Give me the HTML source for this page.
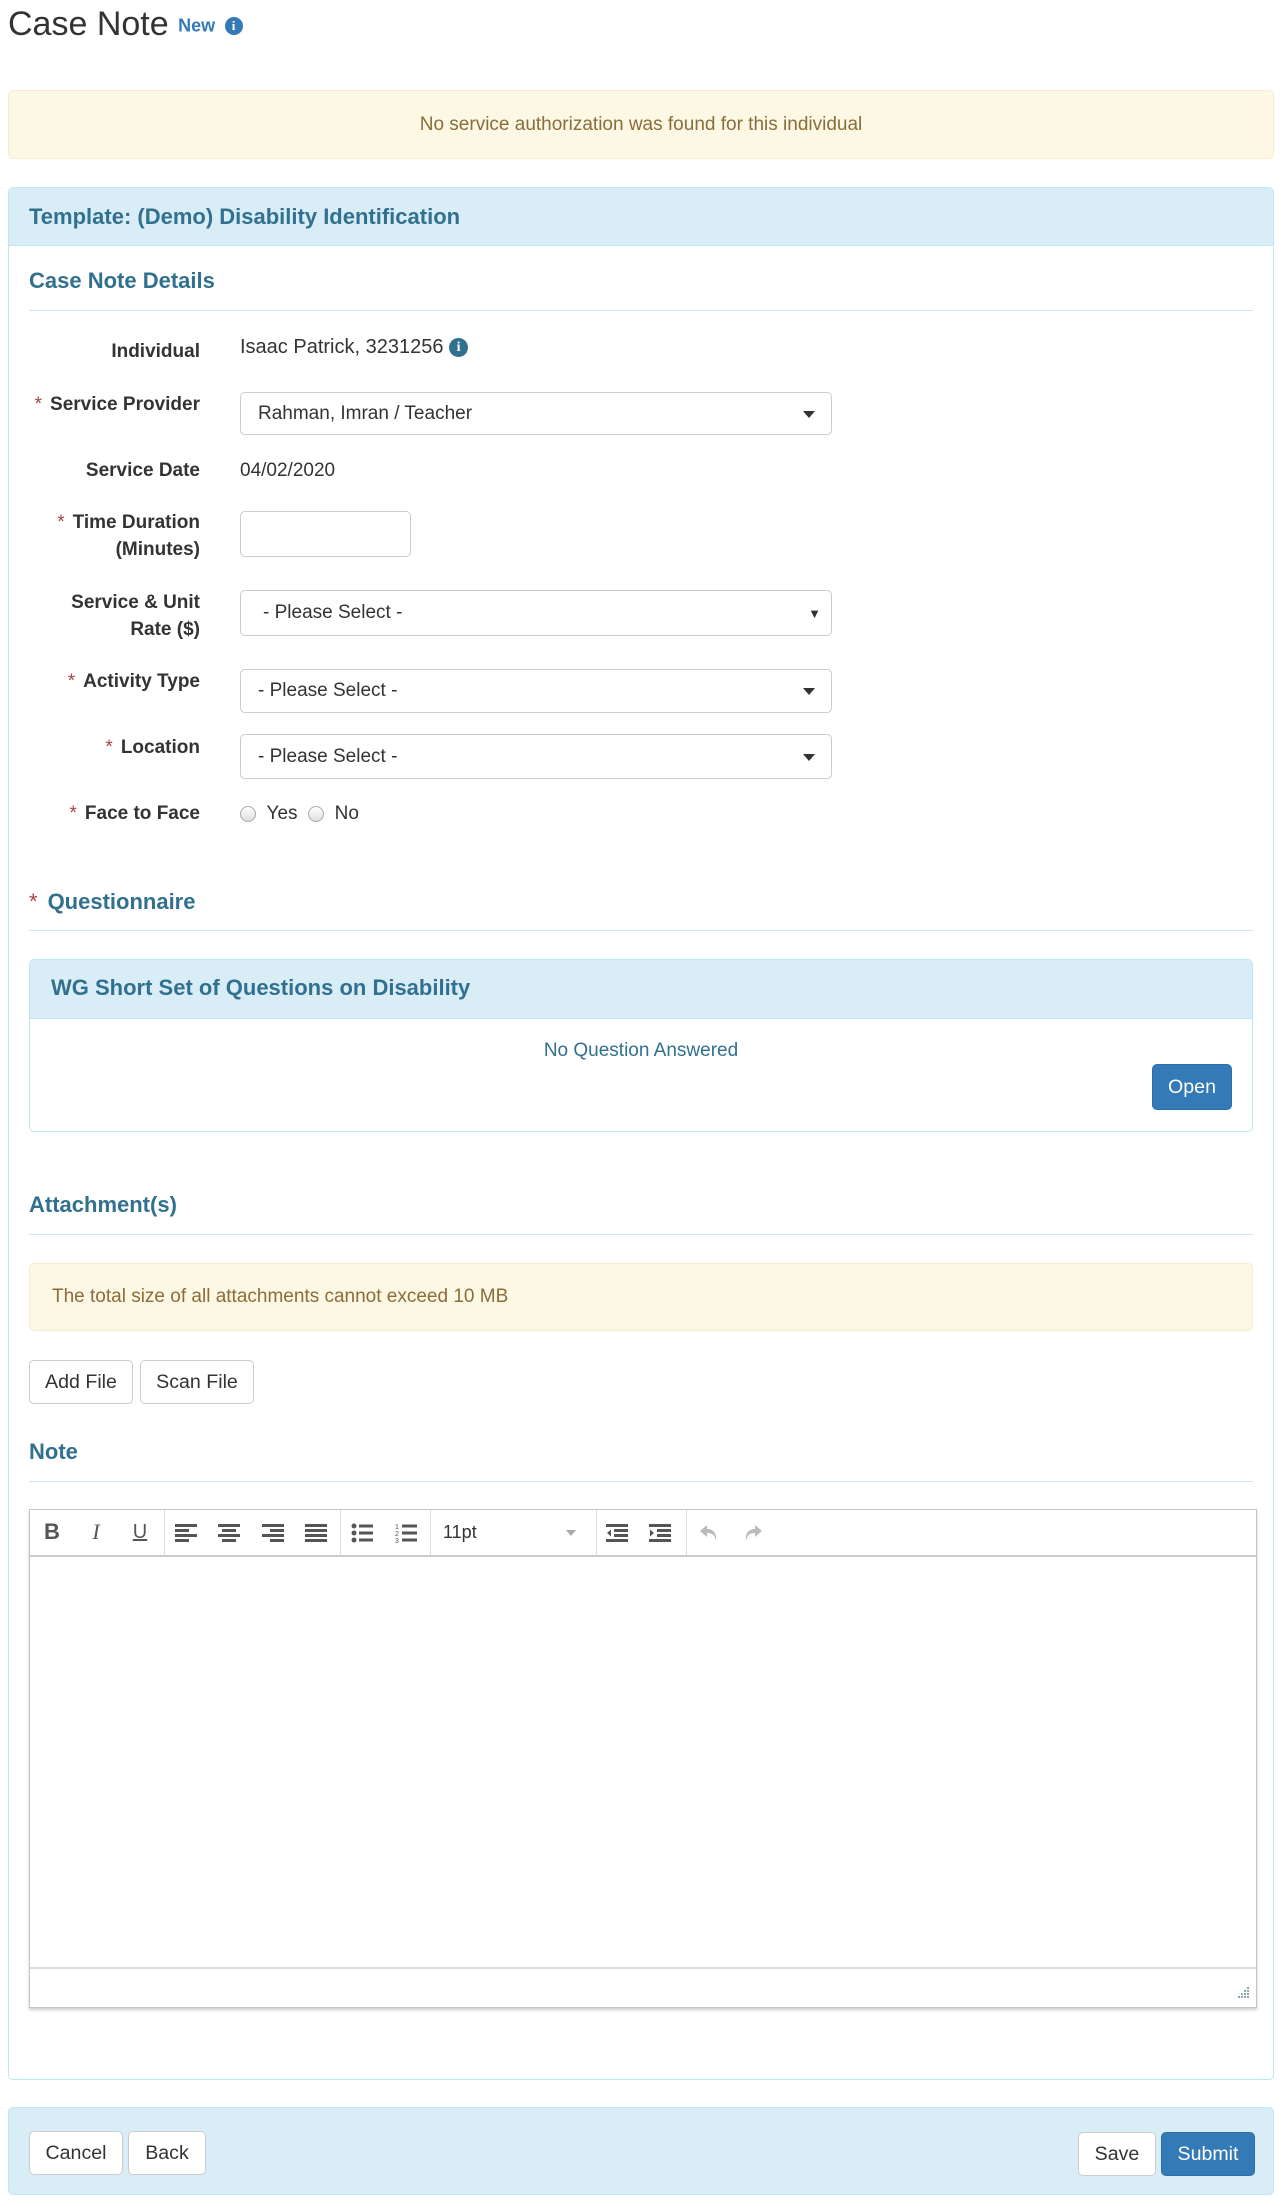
<!DOCTYPE html>
<html><head><meta charset="utf-8"><style>
*{box-sizing:border-box;margin:0;padding:0}
body{width:1283px;height:2206px;background:#fff;font-family:"Liberation Sans",sans-serif;color:#333;position:relative;overflow:hidden;font-size:19.6px}
.a{position:absolute}
.lbl{position:absolute;right:1083px;font-weight:bold;text-align:right;line-height:27px;font-size:19px}
.req{color:#a94442;margin-right:8px;font-weight:normal}
.h{position:absolute;left:29px;color:#31708f;font-weight:bold;font-size:22px}
.hr{position:absolute;left:29px;width:1224px;height:1px;background:#c9e7ef}
.sel{position:absolute;left:240px;width:592px;border:1px solid #ccc;border-radius:5px;padding-left:17px;font-size:19px;display:flex;align-items:center}
.car{position:absolute;right:16px;top:50%;margin-top:-3px;border-left:6px solid transparent;border-right:6px solid transparent;border-top:7px solid #333}
.btn{position:absolute;border:1px solid #ccc;border-radius:5px;background:#fff;font-size:19.6px;display:flex;align-items:center;justify-content:center;color:#333}
.pri{background:#337ab7;border-color:#2e6da4;color:#fff}
.info{display:inline-block;width:19px;height:19px;border-radius:50%;background:#31708f;color:#fff;font-size:14px;font-weight:bold;text-align:center;line-height:19px;font-family:"Liberation Serif",serif;vertical-align:middle}
.tb{position:absolute;top:1509px;height:46px;display:flex;align-items:center;justify-content:center;color:#555}
.sep{position:absolute;top:1510px;width:1px;height:45px;background:#ddd}
.ic{position:absolute;top:1523px}
.radio{display:inline-block;width:16px;height:16px;border-radius:50%;border:1px solid #aaa;background:linear-gradient(#fff,#ddd);vertical-align:middle}
</style></head><body>

<div class="a" style="left:8px;top:5px;font-size:34px;color:#333">Case Note <span style="font-size:18px;color:#337ab7;font-weight:bold;vertical-align:middle">New</span> <span class="info" style="width:18px;height:18px;line-height:18px;background:#337ab7;font-size:13px">i</span></div>

<div class="a" style="left:8px;top:90px;width:1266px;height:69px;background:#fcf8e3;border:1px solid #faebcc;border-radius:5px;color:#8a6d3b;display:flex;align-items:center;justify-content:center;font-size:19px">No service authorization was found for this individual</div>

<div class="a" style="left:8px;top:187px;width:1266px;height:1893px;border:1px solid #bce8f1;border-radius:5px"></div>
<div class="a" style="left:9px;top:188px;width:1264px;height:58px;background:#d9edf7;border-bottom:1px solid #bce8f1;border-radius:4px 4px 0 0"></div>
<div class="h" style="top:204px;font-size:22px">Template: (Demo) Disability Identification</div>

<div class="h" style="top:268px">Case Note Details</div>
<div class="hr" style="top:310px"></div>

<div class="lbl" style="top:338px">Individual</div>
<div class="a" style="left:240px;top:336px;font-size:20px">Isaac Patrick, 3231256 <span class="info">i</span></div>

<div class="lbl" style="top:391px"><span class="req">*</span>Service Provider</div>
<div class="sel" style="top:392px;height:43px">Rahman, Imran / Teacher<span class="car"></span></div>

<div class="lbl" style="top:457px">Service Date</div>
<div class="a" style="left:240px;top:457px;font-size:19px;line-height:27px">04/02/2020</div>

<div class="lbl" style="top:509px"><span class="req">*</span>Time Duration<br>(Minutes)</div>
<div class="a" style="left:240px;top:511px;width:171px;height:46px;border:1px solid #ccc;border-radius:5px"></div>

<div class="lbl" style="top:589px">Service &amp; Unit<br>Rate ($)</div>
<div class="sel" style="top:590px;height:46px;padding-left:22px">- Please Select -<span style="position:absolute;right:10px;font-size:13px">▼</span></div>

<div class="lbl" style="top:668px"><span class="req">*</span>Activity Type</div>
<div class="sel" style="top:669px;height:44px">- Please Select -<span class="car"></span></div>

<div class="lbl" style="top:734px"><span class="req">*</span>Location</div>
<div class="sel" style="top:734px;height:45px">- Please Select -<span class="car"></span></div>

<div class="lbl" style="top:800px"><span class="req">*</span>Face to Face</div>
<div class="a" style="left:240px;top:800px;font-size:19px;line-height:27px"><span class="radio"></span> &nbsp;Yes &nbsp;<span class="radio"></span> &nbsp;No</div>

<div class="h" style="top:889px"><span style="color:#a94442;font-weight:normal;margin-right:10px">*</span>Questionnaire</div>
<div class="hr" style="top:930px"></div>

<div class="a" style="left:29px;top:959px;width:1224px;height:173px;border:1px solid #bce8f1;border-radius:5px"></div>
<div class="a" style="left:30px;top:960px;width:1222px;height:59px;background:#d9edf7;border-bottom:1px solid #bce8f1;border-radius:4px 4px 0 0"></div>
<div class="h" style="left:51px;top:975px">WG Short Set of Questions on Disability</div>
<div class="a" style="left:29px;width:1224px;top:1040px;text-align:center;color:#31708f;font-size:19px">No Question Answered</div>
<div class="btn pri" style="left:1152px;top:1064px;width:80px;height:46px">Open</div>

<div class="h" style="top:1192px">Attachment(s)</div>
<div class="hr" style="top:1234px"></div>
<div class="a" style="left:29px;top:1263px;width:1224px;height:68px;background:#fcf8e3;border:1px solid #faebcc;border-radius:5px;color:#8a6d3b;padding-left:22px;display:flex;align-items:center;font-size:19px">The total size of all attachments cannot exceed 10 MB</div>
<div class="btn" style="left:29px;top:1360px;width:104px;height:44px">Add File</div>
<div class="btn" style="left:140px;top:1360px;width:114px;height:44px">Scan File</div>

<div class="h" style="top:1439px">Note</div>
<div class="hr" style="top:1481px"></div>

<div class="a" style="left:29px;top:1509px;width:1228px;height:499px;border:1px solid #c5c5c5;box-shadow:0 2px 3px rgba(0,0,0,.2)"></div>
<div class="a" style="left:30px;top:1555px;width:1226px;height:2px;background:#ccc"></div>
<div class="a" style="left:30px;top:1967px;width:1226px;height:2px;background:#ddd"></div>
<div class="tb" style="left:40px;width:24px;font-weight:bold;font-size:22px">B</div>
<div class="tb" style="left:84px;width:24px;font-style:italic;font-size:22px;font-family:'Liberation Serif',serif">I</div>
<div class="tb" style="left:128px;width:24px;text-decoration:underline;font-size:20px">U</div>
<div class="sep" style="left:164px"></div>
<svg class="ic" style="left:175px" width="22" height="20" fill="#555"><rect x="0" y="1" width="22" height="3"/><rect x="0" y="6" width="14" height="3"/><rect x="0" y="11" width="22" height="3"/><rect x="0" y="16" width="14" height="3"/></svg>
<svg class="ic" style="left:218px" width="22" height="20" fill="#555"><rect x="0" y="1" width="22" height="3"/><rect x="4" y="6" width="14" height="3"/><rect x="0" y="11" width="22" height="3"/><rect x="4" y="16" width="14" height="3"/></svg>
<svg class="ic" style="left:262px" width="22" height="20" fill="#555"><rect x="0" y="1" width="22" height="3"/><rect x="8" y="6" width="14" height="3"/><rect x="0" y="11" width="22" height="3"/><rect x="8" y="16" width="14" height="3"/></svg>
<svg class="ic" style="left:305px" width="22" height="20" fill="#555"><rect x="0" y="1" width="22" height="3"/><rect x="0" y="6" width="22" height="3"/><rect x="0" y="11" width="22" height="3"/><rect x="0" y="16" width="22" height="3"/></svg>
<div class="sep" style="left:340px"></div>
<svg class="ic" style="left:351px" width="22" height="20" fill="#555"><circle cx="3" cy="3" r="2.5"/><circle cx="3" cy="10" r="2.5"/><circle cx="3" cy="17" r="2.5"/><rect x="8" y="1.5" width="14" height="3"/><rect x="8" y="8.5" width="14" height="3"/><rect x="8" y="15.5" width="14" height="3"/></svg>
<svg class="ic" style="left:395px" width="22" height="20" fill="#555"><text x="0" y="6" font-size="7" font-family="Liberation Sans">1</text><text x="0" y="13" font-size="7" font-family="Liberation Sans">2</text><text x="0" y="20" font-size="7" font-family="Liberation Sans">3</text><rect x="7" y="1.5" width="15" height="3"/><rect x="7" y="8.5" width="15" height="3"/><rect x="7" y="15.5" width="15" height="3"/></svg>
<div class="sep" style="left:430px"></div>
<div class="tb" style="left:443px;font-size:18px;color:#333">11pt</div>
<div class="a" style="left:566px;top:1530px;border-left:5px solid transparent;border-right:5px solid transparent;border-top:6px solid #aaa"></div>
<div class="sep" style="left:596px"></div>
<svg class="ic" style="left:606px" width="22" height="20" fill="#555"><rect x="0" y="1" width="22" height="3"/><rect x="8" y="6" width="14" height="3"/><rect x="8" y="11" width="14" height="3"/><rect x="0" y="16" width="22" height="3"/><path d="M5 6.5 L1 10 L5 13.5Z"/></svg>
<svg class="ic" style="left:649px" width="22" height="20" fill="#555"><rect x="0" y="1" width="22" height="3"/><rect x="8" y="6" width="14" height="3"/><rect x="8" y="11" width="14" height="3"/><rect x="0" y="16" width="22" height="3"/><path d="M1 6.5 L5 10 L1 13.5Z"/></svg>
<div class="sep" style="left:686px"></div>
<svg class="ic" style="left:699px" width="20" height="20" fill="#bbb"><path d="M8 2 L1 8 L8 14 L8 10 C13 10 16 12 17 18 C18 10 14 6 8 6Z"/></svg>
<svg class="ic" style="left:743px" width="20" height="20" fill="#bbb"><path d="M12 2 L19 8 L12 14 L12 10 C7 10 4 12 3 18 C2 10 6 6 12 6Z"/></svg>
<svg class="a" style="left:1236px;top:1986px" width="14" height="14" fill="#8aa"><rect x="11" y="1" width="2" height="2"/><rect x="8" y="4" width="2" height="2"/><rect x="11" y="4" width="2" height="2"/><rect x="5" y="7" width="2" height="2"/><rect x="8" y="7" width="2" height="2"/><rect x="11" y="7" width="2" height="2"/><rect x="2" y="10" width="2" height="2"/><rect x="5" y="10" width="2" height="2"/><rect x="8" y="10" width="2" height="2"/><rect x="11" y="10" width="2" height="2"/></svg>

<div class="a" style="left:8px;top:2107px;width:1266px;height:88px;background:#d9edf7;border:1px solid #bce8f1;border-radius:5px"></div>
<div class="btn" style="left:29px;top:2131px;width:94px;height:44px">Cancel</div>
<div class="btn" style="left:128px;top:2131px;width:78px;height:44px">Back</div>
<div class="btn" style="left:1078px;top:2132px;width:78px;height:44px">Save</div>
<div class="btn pri" style="left:1161px;top:2132px;width:94px;height:44px">Submit</div>
</body></html>
